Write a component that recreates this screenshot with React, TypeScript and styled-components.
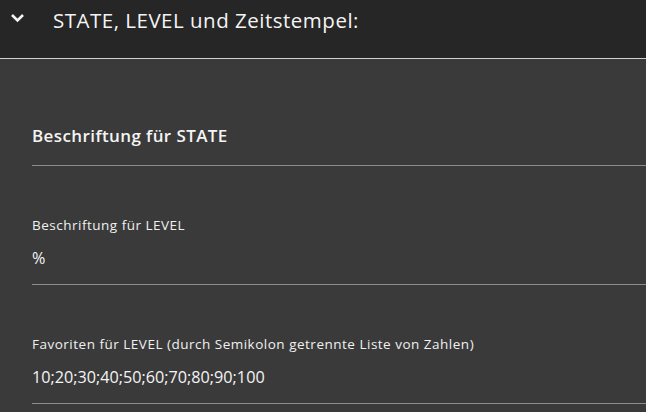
import styled, { createGlobalStyle } from 'styled-components';

const GlobalStyle = createGlobalStyle`
  html, body {
    margin: 0;
    padding: 0;
    background: #3a3a3a;
  }
  body {
    font-family: "Open Sans", "Noto Sans", sans-serif;
    color: #ffffff;
  }
`

const Panel = styled.div`
  width: 646px;
  height: 412px;
  overflow: hidden;
  background: #3a3a3a;
`
const Header = styled.div`
  height: 59px;
  background: #262626;
  border-bottom: 1px solid #d0d0d0;
  display: flex;
  align-items: flex-start;
  padding: 8px 0 0 10px;
  box-sizing: border-box;
`
const Chevron = styled.svg`
  width: 15px;
  height: 10px;
  margin-top: 5px;
  flex-shrink: 0;
`
const Title = styled.h2`
  margin: 0 0 0 28px;
  font-size: 20.5px;
  font-weight: 400;
  line-height: 24px;
  letter-spacing: 0.5px;
  color: #f4f4f4;
`
const Body = styled.div`
  padding-left: 32px;
`
const Field = styled.div<{ $top: number }>`
  padding-top: ${p => p.$top}px;
  border-bottom: 1px solid #8c8c8c;
  display: flex;
  flex-direction: column;
`
const Label = styled.div`
  font-size: 13.5px;
  line-height: 16px;
  letter-spacing: 0.5px;
  color: #f0f0f0;
`
const Value = styled.div`
  font-size: 16.2px;
  line-height: 22px;
  margin-top: 14px;
  padding-bottom: 15px;
  color: #f4f4f4;
`
const Placeholder = styled.div`
  font-size: 17px;
  font-weight: 600;
  line-height: 22px;
  letter-spacing: 0.4px;
  padding-bottom: 18px;
  color: #f4f4f4;
`

const App = () => {
  return (
    <Panel>
      <GlobalStyle />
      <Header>
        <Chevron viewBox="0 0 15 10">
          <polyline points="2,2 7.5,7.5 13,2" fill="none" stroke="#f4f4f4" strokeWidth="2.6" />
        </Chevron>
        <Title>STATE, LEVEL und Zeitstempel:</Title>
      </Header>
      <Body>
        <Field $top={66}>
          <Placeholder>Beschriftung für STATE</Placeholder>
        </Field>
        <Field $top={51}>
          <Label>Beschriftung für LEVEL</Label>
          <Value>%</Value>
        </Field>
        <Field $top={51}>
          <Label>Favoriten für LEVEL (durch Semikolon getrennte Liste von Zahlen)</Label>
          <Value>10;20;30;40;50;60;70;80;90;100</Value>
        </Field>
      </Body>
    </Panel>
  )
}

export default App
